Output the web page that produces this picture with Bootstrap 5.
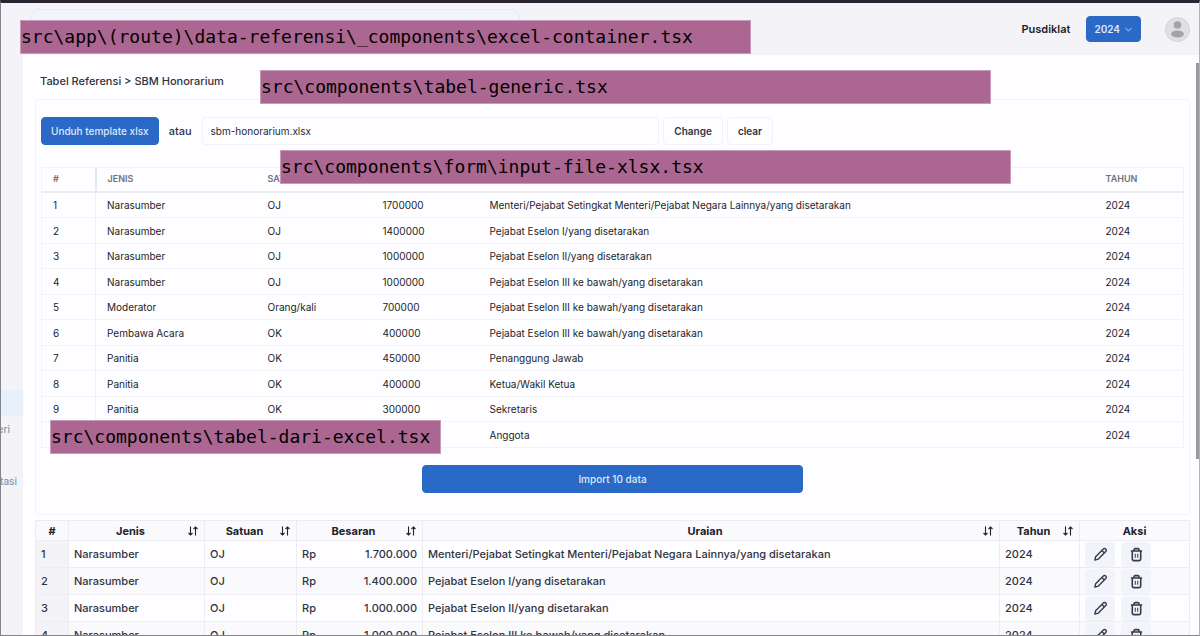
<!DOCTYPE html>
<html lang="id">
<head>
<meta charset="utf-8">
<meta name="viewport" content="width=device-width, initial-scale=1">
<title>SBM Honorarium</title>
<link href="https://cdn.jsdelivr.net/npm/bootstrap@5.3.0/dist/css/bootstrap.min.css" rel="stylesheet">
<style>
  body { font-family: Inter, "Liberation Sans", sans-serif; font-size: 11px; line-height: 16px; color: #30343f; background: #fefdff; }
  .window { border: 1px solid #85848a; border-top: 3px solid #2a2430; border-right-color: #b4b4b8; }
  .topbar { height: 52px; background: #f4f4f8; padding: 0 9px 0 29px; }
  .search { width: 490px; height: 40px; background: #f1f4fa; border: 1px solid #e6eaf2; border-radius: 10px; }
  .unit { font-size: 11px; font-weight: 600; color: #1b1d27; }
  .btn { --bs-btn-font-size: 10px; --bs-btn-line-height: 16px; --bs-btn-border-radius: 4px; --bs-btn-padding-y: 5px; --bs-btn-padding-x: 9px; --bs-btn-font-weight: 500; }
  .btn-primary { --bs-btn-bg: #2b69c6; --bs-btn-border-color: #2b69c6; --bs-btn-color: #dfe8fb; }
  .btn-light { --bs-btn-bg: #fefdff; --bs-btn-border-color: #f1f1f7; --bs-btn-color: #30343f; --bs-btn-padding-x: 10px; --bs-btn-font-weight: 600; }
  .year { --bs-btn-padding-y: 4px; --bs-btn-padding-x: 7px; --bs-btn-font-weight: 600; }
  .side { width: 22px; background: #f4f4f8; padding-top: 335px; }
  .side a { display: flex; justify-content: flex-end; align-items: center; height: 26px; font-size: 10px; font-weight: 500; color: #8f95a8; text-decoration: none; padding-right: 6px; }
  .side a.current { background: #e8f1fb; }
  .side a.short { padding-right: 13px; }
  .page { padding: 18px 6px 0 12px; }
  .scroll { width: 3px; padding-top: 8px; }
  .scroll div { height: 396px; background: #98989d; }
  .crumb { padding: 0 5px; margin-bottom: 10px; font-weight: 500; }
  .panel { border: 1px solid #f3f2f8; border-radius: 3px; padding: 17px 5px 21px; }
  .or-label { margin: 0 10px; }
  .file { min-width: 0; height: 28px; font-size: 10px; color: #262a35; background: #fefdff; border: 1px solid #f1f1f7; border-radius: 4px; padding: 0 8px; }
  table { table-layout: fixed; width: 100%; border-collapse: collapse; }
  .preview { height: 281px; margin: 22px 0 17px; font-size: 10px; color: #1b1f2a; border: 1px solid #f2f2f7; }
  .preview th, .preview td { padding: 0 11px; border-bottom: 1px solid #f2f2f7; line-height: 16px; }
  .preview th { height: 24px; font-size: 9px; font-weight: 600; color: #6d7180; border-bottom: 2px solid #ececf1; }
  .preview tr > :first-child { border-right: 1px solid #f0f0f5; }
  .preview thead tr > :first-child { border-right: 2px solid #e6e6ec; }
  .grid-table { margin-top: 5px; font-weight: 500; }
  .grid-table th, .grid-table td { border: 1px solid #ececf1; padding: 0 5px; height: 27px; white-space: nowrap; }
  .grid-table th { height: 20px; font-weight: 700; text-align: center; background: #fafafc; color: #20222c; }
  .grid-table tbody tr:nth-child(even) { background: #fafafc; }
  .grid-table tbody td:first-child { background: #f4f4f8; }
  .acts { gap: 6px; }
  .act { width: 30px; height: 25px; border: 0; border-radius: 4px; background: #f2f4f9; color: #363b4b; padding: 0; }
  .note { position: absolute; width: 731px; height: 34px; background: #ab6791; border: 1px solid #c99bba; color: #000; font: 18px/31px "DejaVu Sans Mono", monospace; white-space: nowrap; }
  .note-a { left: 20px; top: 20px; }
  .note-b { left: 260px; top: 70px; }
  .note-c { left: 280px; top: 150px; }
  .note-d { left: 50px; top: 420px; width: 391px; }
</style>
</head>
<body>
<svg class="d-none">
  <symbol id="sort" viewBox="0 0 12 12"><path d="M3.500 1.500v8.500M1.500 8l2 2 2-2M8.500 10.500V2M6.500 4l2-2 2 2" fill="none" stroke="currentColor" stroke-width="1.100"/></symbol>
  <symbol id="pencil" viewBox="0 0 16 16"><path d="M2 14l.8-3.600L11 2.200a1.700 1.700 0 0 1 2.600 0 1.700 1.700 0 0 1 0 2.600L5.500 13zM9.500 3.800l2.600 2.600" fill="none" stroke="currentColor" stroke-width="1.500" stroke-linejoin="round"/></symbol>
  <symbol id="trash" viewBox="0 0 16 16"><path d="M2 4.200h12M3.500 4.500v8.300a1.700 1.700 0 0 0 1.700 1.700h5.600a1.700 1.700 0 0 0 1.700-1.700V4.500M5.300 4V3a1.300 1.300 0 0 1 1.300-1.300h2.800A1.300 1.300 0 0 1 10.700 3v1" fill="none" stroke="currentColor" stroke-width="1.700"/><path d="M6.700 7.200v4.300M9.300 7.200v4.300" stroke="currentColor" stroke-width="1.100"/></symbol>
</svg>
<div class="window vh-100 d-flex flex-column overflow-hidden">
  <header class="topbar d-flex align-items-center flex-shrink-0">
    <input class="search" type="search" aria-label="Cari">
    <span class="unit ms-auto">Pusdiklat</span>
    <button class="btn btn-primary year d-flex align-items-center gap-1 ms-3" type="button">2024
      <svg width="9" height="9" viewBox="0 0 9 9"><path d="M1.500 3l3 3 3-3" fill="none" stroke="#7da5ec" stroke-width="1.200"/></svg>
    </button>
    <svg class="ms-4" width="25" height="25" viewBox="0 0 25 25" role="img" aria-label="Profil"><circle cx="12.500" cy="12.500" r="12" fill="#e0e0e2" stroke="#d3d3d6"/><circle cx="12.500" cy="8" r="3.800" fill="#a3a3a7"/><ellipse cx="12.500" cy="17" rx="6.500" ry="3.500" fill="#a3a3a7"/></svg>
  </header>
  <div class="d-flex flex-grow-1 overflow-hidden">
    <nav class="side flex-shrink-0 overflow-hidden">
      <a class="current" href="#" aria-label="Referensi"></a>
      <a class="short" href="#">eri</a>
      <a href="#" aria-label="Menu"></a>
      <a href="#">tasi</a>
    </nav>
    <main class="page flex-grow-1 overflow-hidden">
      <div class="crumb">Tabel Referensi &gt; SBM Honorarium</div>
      <section class="panel">
        <div class="d-flex align-items-center">
          <button class="btn btn-primary" type="button">Unduh template xlsx</button>
          <label class="or-label fw-medium" for="file">atau</label>
          <div class="d-flex gap-1 w-50">
            <input class="file flex-grow-1" id="file" type="text" value="sbm-honorarium.xlsx" readonly>
            <button class="btn btn-light" type="button">Change</button>
            <button class="btn btn-light" type="button">clear</button>
          </div>
        </div>
        <table class="preview">
          <colgroup><col style="width:54px"><col style="width:161px"><col style="width:115px"><col style="width:107px"><col><col style="width:89px"></colgroup>
          <thead><tr><th>#</th><th>JENIS</th><th>SATUAN</th><th>BESARAN</th><th>URAIAN</th><th>TAHUN</th></tr></thead>
          <tbody id="preview"></tbody>
        </table>
        <div class="row justify-content-center gx-0"><div class="col-4"><button class="btn btn-primary w-100" type="button">Import 10 data</button></div></div>
      </section>
      <table class="grid-table">
        <colgroup><col style="width:33px"><col style="width:136px"><col style="width:92px"><col style="width:126px"><col><col style="width:80px"><col style="width:110px"></colgroup>
        <thead><tr id="heads"></tr></thead>
        <tbody id="grid"></tbody>
      </table>
    </main>
    <div class="scroll flex-shrink-0"><div></div></div>
  </div>
</div>
<div class="note note-a">src\app\(route)\data-referensi\_components\excel-container.tsx</div>
<div class="note note-b">src\components\tabel-generic.tsx</div>
<div class="note note-c">src\components\form\input-file-xlsx.tsx</div>
<div class="note note-d">src\components\tabel-dari-excel.tsx</div>
<script src="https://cdn.jsdelivr.net/npm/bootstrap@5.3.0/dist/js/bootstrap.bundle.min.js"></script>
<script>
  const low = 'Pejabat Eselon III ke bawah/yang disetarakan';
  const rows = [
    ['Narasumber', 'OJ', 1700000, 'Menteri/Pejabat Setingkat Menteri/Pejabat Negara Lainnya/yang disetarakan'],
    ['Narasumber', 'OJ', 1400000, 'Pejabat Eselon I/yang disetarakan'],
    ['Narasumber', 'OJ', 1000000, 'Pejabat Eselon II/yang disetarakan'],
    ['Narasumber', 'OJ', 1000000, low],
    ['Moderator', 'Orang/kali', 700000, low],
    ['Pembawa Acara', 'OK', 400000, low],
    ['Panitia', 'OK', 450000, 'Penanggung Jawab'],
    ['Panitia', 'OK', 400000, 'Ketua/Wakil Ketua'],
    ['Panitia', 'OK', 300000, 'Sekretaris'],
    ['Panitia', 'OK', 300000, 'Anggota']
  ];
  const icon = (id, size) => `<svg width="${size}" height="${size}"><use href="#${id}"/></svg>`;
  document.getElementById('preview').innerHTML = rows.map((r, i) =>
    `<tr><td>${i + 1}</td>${r.map(v => `<td>${v}</td>`).join('')}<td>2024</td></tr>`).join('');
  document.getElementById('heads').innerHTML = ['#', 'Jenis', 'Satuan', 'Besaran', 'Uraian', 'Tahun', 'Aksi'].map((h, i) =>
    i % 6 ? `<th><div class="d-flex align-items-center"><span class="flex-grow-1">${h}</span>${icon('sort', 12)}</div></th>` : `<th>${h}</th>`).join('');
  document.getElementById('grid').innerHTML = rows.slice(0, 4).map((r, i) =>
    `<tr><td>${i + 1}</td><td>${r[0]}</td><td>${r[1]}</td>
     <td><div class="d-flex justify-content-between"><span>Rp</span><span>${String(r[2]).replace(/\B(?=(\d{3})+$)/g, '.')}</span></div></td>
     <td>${r[3]}</td><td>2024</td>
     <td><div class="acts d-flex"><button class="act" type="button" aria-label="Ubah">${icon('pencil', 15)}</button><button class="act" type="button" aria-label="Hapus">${icon('trash', 15)}</button></div></td></tr>`).join('');
</script>
</body>
</html>
